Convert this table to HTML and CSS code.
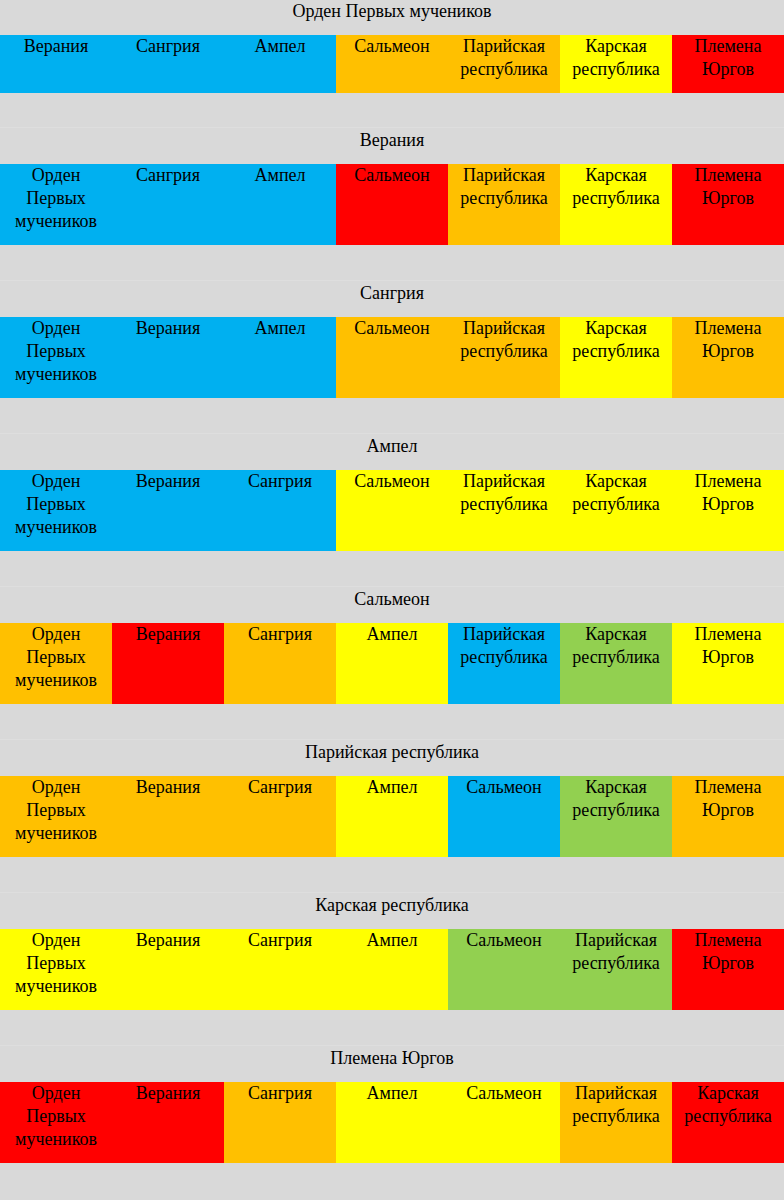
FILE: index.html
```html
<!DOCTYPE html>
<html lang="ru">
<head>
<meta charset="utf-8">
<title>Отношения</title>
<link rel="stylesheet" href="styles.css">
</head>
<body>
<div class="page">
  <section class="section">
    <div class="title">Орден Первых мучеников</div>
    <div class="row">
      <div class="cell blue">Верания</div>
      <div class="cell blue">Сангрия</div>
      <div class="cell blue">Ампел</div>
      <div class="cell orange">Сальмеон</div>
      <div class="cell orange">Парийская республика</div>
      <div class="cell yellow">Карская республика</div>
      <div class="cell red">Племена Юргов</div>
    </div>
  </section>
  <section class="section">
    <div class="title">Верания</div>
    <div class="row">
      <div class="cell blue">Орден Первых мучеников</div>
      <div class="cell blue">Сангрия</div>
      <div class="cell blue">Ампел</div>
      <div class="cell red">Сальмеон</div>
      <div class="cell orange">Парийская республика</div>
      <div class="cell yellow">Карская республика</div>
      <div class="cell red">Племена Юргов</div>
    </div>
  </section>
  <section class="section">
    <div class="title">Сангрия</div>
    <div class="row">
      <div class="cell blue">Орден Первых мучеников</div>
      <div class="cell blue">Верания</div>
      <div class="cell blue">Ампел</div>
      <div class="cell orange">Сальмеон</div>
      <div class="cell orange">Парийская республика</div>
      <div class="cell yellow">Карская республика</div>
      <div class="cell orange">Племена Юргов</div>
    </div>
  </section>
  <section class="section">
    <div class="title">Ампел</div>
    <div class="row">
      <div class="cell blue">Орден Первых мучеников</div>
      <div class="cell blue">Верания</div>
      <div class="cell blue">Сангрия</div>
      <div class="cell yellow">Сальмеон</div>
      <div class="cell yellow">Парийская республика</div>
      <div class="cell yellow">Карская республика</div>
      <div class="cell yellow">Племена Юргов</div>
    </div>
  </section>
  <section class="section">
    <div class="title">Сальмеон</div>
    <div class="row">
      <div class="cell orange">Орден Первых мучеников</div>
      <div class="cell red">Верания</div>
      <div class="cell orange">Сангрия</div>
      <div class="cell yellow">Ампел</div>
      <div class="cell blue">Парийская республика</div>
      <div class="cell green">Карская республика</div>
      <div class="cell yellow">Племена Юргов</div>
    </div>
  </section>
  <section class="section">
    <div class="title">Парийская республика</div>
    <div class="row">
      <div class="cell orange">Орден Первых мучеников</div>
      <div class="cell orange">Верания</div>
      <div class="cell orange">Сангрия</div>
      <div class="cell yellow">Ампел</div>
      <div class="cell blue">Сальмеон</div>
      <div class="cell green">Карская республика</div>
      <div class="cell orange">Племена Юргов</div>
    </div>
  </section>
  <section class="section">
    <div class="title">Карская республика</div>
    <div class="row">
      <div class="cell yellow">Орден Первых мучеников</div>
      <div class="cell yellow">Верания</div>
      <div class="cell yellow">Сангрия</div>
      <div class="cell yellow">Ампел</div>
      <div class="cell green">Сальмеон</div>
      <div class="cell green">Парийская республика</div>
      <div class="cell red">Племена Юргов</div>
    </div>
  </section>
  <section class="section">
    <div class="title">Племена Юргов</div>
    <div class="row">
      <div class="cell red">Орден Первых мучеников</div>
      <div class="cell red">Верания</div>
      <div class="cell orange">Сангрия</div>
      <div class="cell yellow">Ампел</div>
      <div class="cell yellow">Сальмеон</div>
      <div class="cell orange">Парийская республика</div>
      <div class="cell red">Карская республика</div>
    </div>
  </section>
</div>
</body>
</html>
```
FILE: styles.css
```css
html, body {
  margin: 0;
  padding: 0;
  background: #d9d9d9;
}
body {
  font-family: "Liberation Serif", "Times New Roman", serif;
  font-size: 18px;
  line-height: 23px;
  color: #000;
}
.page {
  width: 784px;
  min-height: 1200px;
}
.section + .section {
  margin-top: 35px;
  border-top: 1px solid #dedede;
}
.section:nth-child(2) {
  margin-top: 34px;
}
.section + .section .title {
  padding-top: 1px;
}
.title {
  text-align: center;
  padding-bottom: 12px;
}
.row {
  display: grid;
  grid-template-columns: repeat(7, 112px);
}
.cell {
  padding: 0 6px 12px;
  text-align: center;
}
.blue { background: #00b0f0; }
.orange { background: #ffc000; }
.yellow { background: #ffff00; }
.red { background: #ff0000; }
.green { background: #92d050; }
```
